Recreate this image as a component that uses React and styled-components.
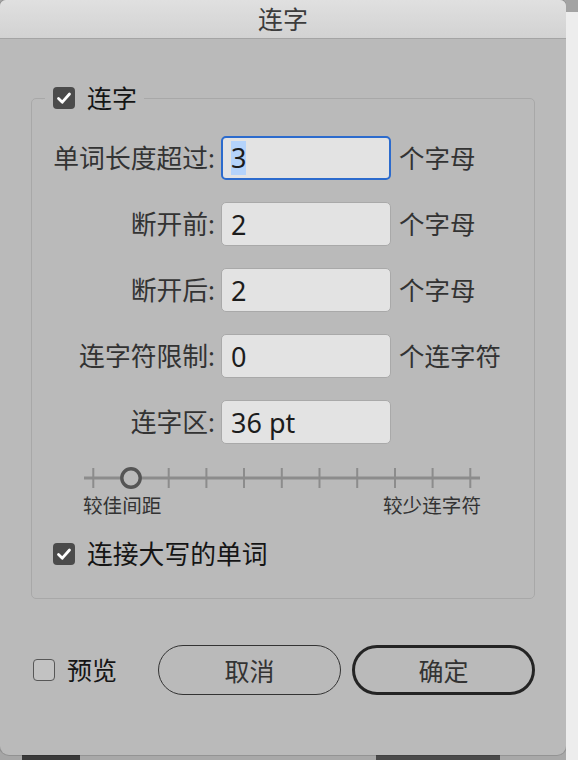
import styled, { createGlobalStyle } from 'styled-components'

const GlobalStyle = createGlobalStyle`
  html, body {
    margin: 0;
    padding: 0;
  }
  body {
    background: #9c9c9c;
    font-family: "Noto Sans", "Noto Sans CJK SC", sans-serif;
  }
`

const TICKS = [9.3, 47, 84.7, 122.4, 160, 197.8, 235.5, 273.2, 311, 348.6, 386.3]

const fields = [
  { label: '单词长度超过:', value: '3', unit: '个字母', focused: true },
  { label: '断开前:', value: '2', unit: '个字母' },
  { label: '断开后:', value: '2', unit: '个字母' },
  { label: '连字符限制:', value: '0', unit: '个连字符' },
  { label: '连字区:', value: '36 pt' },
]

const Check = ({ checked }) => (
  <Box checked={checked}>
    {checked && (
      <svg width="22" height="22" viewBox="0 0 22 22">
        <polyline points="5.5,11.5 9.3,15.2 16.5,7" fill="none" stroke="#fff" strokeWidth="2.8" strokeLinecap="round" strokeLinejoin="round" />
      </svg>
    )}
  </Box>
)

const Slider = () => (
  <SliderWrap>
    <svg width="396" height="22" viewBox="0 0 396 22">
      <line x1="0" y1="11" x2="396" y2="11" stroke="#8c8c8c" strokeWidth="3" />
      {TICKS.map((x, i) => i !== 1 && (
        <line key={i} x1={x} y1="1" x2={x} y2="21" stroke="#8c8c8c" strokeWidth="2" />
      ))}
      <circle cx={TICKS[1]} cy="11" r="9.2" fill="#bababa" stroke="#555" strokeWidth="3.4" />
    </svg>
    <SliderLabels>
      <span>较佳间距</span>
      <span>较少连字符</span>
    </SliderLabels>
  </SliderWrap>
)

const App = () => {
  return (
    <Page>
      <GlobalStyle />
      <Dialog>
        <TitleBar>连字</TitleBar>
        <Body>
          <Group>
            <Legend>
              <CheckRow>
                <Check checked />
                <span>连字</span>
              </CheckRow>
            </Legend>
            <Form>
              {fields.map((f) => (
                <Row key={f.label}>
                  <Label>{f.label}</Label>
                  <Field focused={f.focused}>
                    {f.focused ? <Selected>{f.value}</Selected> : f.value}
                  </Field>
                  <Unit>{f.unit}</Unit>
                </Row>
              ))}
            </Form>
            <Slider />
            <CapsRow>
              <Check checked />
              <span>连接大写的单词</span>
            </CapsRow>
          </Group>
          <Footer>
            <CheckRow>
              <Check />
              <span>预览</span>
            </CheckRow>
            <Button>取消</Button>
            <Button primary>确定</Button>
          </Footer>
        </Body>
      </Dialog>
      <Side />
    </Page>
  )
}

const Page = styled.div`
  display: flex;
  align-items: flex-start;
  width: 578px;
  height: 760px;
  overflow: hidden;
  background: linear-gradient(90deg, #a6a6a6 0 22px, #3a3a3a 22px 80px, #a8a8a8 80px 376px, #4a4a4a 376px 500px, #a8a8a8 500px);
`

const Dialog = styled.div`
  width: 566px;
  height: 755px;
  flex-shrink: 0;
  display: flex;
  flex-direction: column;
  background: #bababa;
  border-radius: 6px 6px 9px 9px;
  overflow: hidden;
  box-shadow: 0 0 0 1px rgba(0, 0, 0, 0.12);
`

const Side = styled.div`
  flex: 1;
  align-self: stretch;
  background: linear-gradient(#a3a3a3 0 12px, #ededed 12px);
`

const TitleBar = styled.div`
  height: 38px;
  flex-shrink: 0;
  display: flex;
  align-items: center;
  justify-content: center;
  background: linear-gradient(#e0e0e0, #d2d2d2);
  border-bottom: 1px solid #a4a4a4;
  font-size: 25px;
  line-height: 25px;
  color: #3c3c3c;
`

const Body = styled.div`
  padding: 47px 31px 0;
`

const Group = styled.fieldset`
  margin: 0;
  min-width: 0;
  padding: 0 0 32px;
  border: 1px solid #a8a8a8;
  border-radius: 5px;
`

const Legend = styled.legend`
  margin-left: 13px;
  padding: 0 7px 0 8px;
`

const CheckRow = styled.div`
  display: flex;
  align-items: center;
  gap: 12px;
  font-size: 25px;
  line-height: 24px;
  color: #151515;
`

const Box = styled.div`
  width: 22px;
  height: 22px;
  box-sizing: border-box;
  border-radius: 4px;
  background: ${({ checked }) => (checked ? '#4b4b4b' : '#c2c2c2')};
  border: ${({ checked }) => (checked ? 'none' : '1.5px solid #575757')};
  display: flex;
  flex-shrink: 0;
`

const Form = styled.div`
  margin-top: 26px;
  display: grid;
  row-gap: 22px;
`

const Row = styled.div`
  display: grid;
  grid-template-columns: 183px 170px auto;
  column-gap: 6px;
  align-items: center;
`

const Label = styled.div`
  text-align: right;
  white-space: nowrap;
  font-size: 25.8px;
  line-height: 30px;
  color: #333;
`

const Field = styled.div`
  height: 44px;
  box-sizing: border-box;
  display: flex;
  align-items: center;
  padding-left: ${({ focused }) => (focused ? '8px' : '9px')};
  background: #e3e3e3;
  border: ${({ focused }) => (focused ? '2px solid #2c6bcd' : '1px solid #a9a9a9')};
  border-radius: 5px;
  font-size: 27px;
  color: #1c1c1c;
`

const Selected = styled.span`
  background: #b4d3fb;
  line-height: 34px;
`

const Unit = styled.div`
  margin-left: 2px;
  font-size: 25.5px;
  line-height: 30px;
  color: #333;
  white-space: nowrap;
`

const SliderWrap = styled.div`
  margin: 23px 0 0 52px;
  width: 397px;
  svg {
    display: block;
  }
`

const SliderLabels = styled.div`
  display: flex;
  justify-content: space-between;
  margin-top: 5px;
  margin-left: -1px;
  font-size: 19.6px;
  line-height: 24px;
  color: #333;
`

const CapsRow = styled(CheckRow)`
  margin: 24px 0 0 21px;
  font-size: 25.8px;
`

const Footer = styled.div`
  margin-top: 46px;
  display: grid;
  grid-template-columns: 1fr 183px 183px;
  column-gap: 11px;
  align-items: center;
  padding-left: 2px;
`

const Button = styled.button`
  height: 50px;
  box-sizing: border-box;
  border-radius: 25px;
  background: transparent;
  border: ${({ primary }) => (primary ? '3px solid #242424' : '1.5px solid #333')};
  font-family: "Noto Sans", "Noto Sans CJK SC", sans-serif;
  font-size: 25px;
  color: #333;
  padding: 0;
`

export default App
